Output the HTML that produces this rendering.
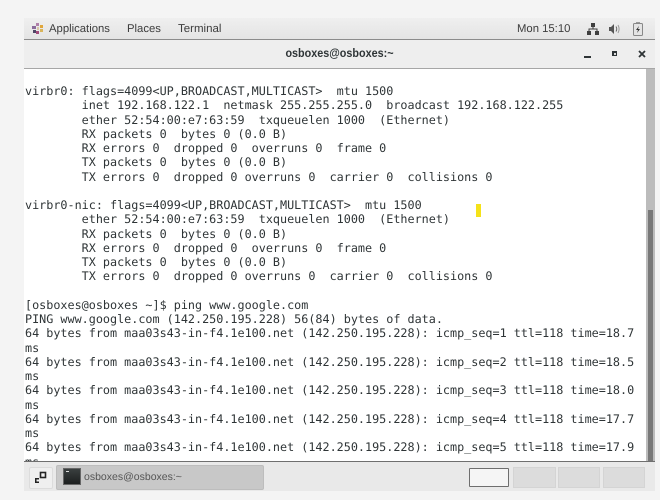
<!DOCTYPE html>
<html><head><meta charset="utf-8">
<style>
html,body{margin:0;padding:0}
body{width:660px;height:500px;overflow:hidden;background:#f4f4f4;position:relative;font-family:"Liberation Sans",sans-serif;color:#333}
.a{position:absolute}
pre{margin:0;font-family:"DejaVu Sans Mono","Liberation Mono",monospace;font-size:11.78px;line-height:14.25px;color:#2e3436;white-space:pre;text-rendering:geometricPrecision}
</style></head><body>
<div class="a" style="left:24px;top:18px;width:631px;height:21px;background:linear-gradient(#efefef,#e4e4e4)"></div>
<div class="a" style="left:24px;top:39px;width:631px;height:1px;background:#8b8b8b"></div>
<svg class="a" style="left:31px;top:22px" width="14" height="14" viewBox="0 0 14 14">
<rect x="5" y="1" width="3" height="3" fill="#b07fa8"/><rect x="9" y="3" width="3" height="3" fill="#e0a63c"/><rect x="1" y="4" width="4" height="3" fill="#8a6a9a"/><rect x="9" y="7" width="3" height="3" fill="#d9b45a"/><rect x="2" y="8" width="3" height="3" fill="#4d4666"/><rect x="5" y="9" width="3" height="3" fill="#a14a7a"/><rect x="6" y="5" width="2" height="3" fill="#d8c8a8"/>
</svg>
<div class="a" style="left:49px;top:21.500px;font-size:11.300px;line-height:15px;color:#3d3d3d;text-rendering:geometricPrecision">Applications</div>
<div class="a" style="left:127px;top:21.500px;font-size:11.300px;line-height:15px;color:#3d3d3d;text-rendering:geometricPrecision">Places</div>
<div class="a" style="left:178px;top:21.500px;font-size:11.500px;line-height:15px;color:#3d3d3d;text-rendering:geometricPrecision">Terminal</div>
<div class="a" style="left:517px;top:21.500px;font-size:11.300px;line-height:15px;color:#3d3d3d;text-rendering:geometricPrecision">Mon 15:10</div>
<svg class="a" style="left:586px;top:22px" width="14" height="14" viewBox="0 0 14 14" fill="#3f3f3f">
<rect x="5" y="1" width="4" height="4"/><rect x="1" y="9" width="4" height="4"/><rect x="9" y="9" width="4" height="4"/>
<path d="M7 5v2M3 9V7h8v2" stroke="#3f3f3f" fill="none"/>
</svg>
<svg class="a" style="left:608px;top:23px" width="14" height="12" viewBox="0 0 14 12">
<path d="M1 4h2l3-3v10L3 8H1z" fill="#555"/><path d="M8 3.500q1.500 2.500 0 5" stroke="#666" fill="none"/><path d="M10 2q2.200 4 0 8" stroke="#999" fill="none"/>
</svg>
<svg class="a" style="left:632px;top:21px" width="12" height="16" viewBox="0 0 12 16">
<rect x="4" y="1" width="4" height="2" fill="#999"/><rect x="1.500" y="2.500" width="9" height="12" rx="1" fill="#e4e4e4" stroke="#888"/><path d="M7 5L4 9h2l-1 3 3-4H6z" fill="#333"/>
</svg>

<div class="a" style="left:24px;top:40px;width:631px;height:28px;background:#eeeeee"></div>
<div class="a" style="left:24px;top:68px;width:631px;height:1px;background:#a6a6a6"></div>
<div class="a" style="left:24px;top:46px;width:631px;text-align:center;font-size:12px;line-height:15px;font-weight:bold;color:#2e3436;transform:scaleX(.9)">osboxes@osboxes:~</div>
<div class="a" style="left:584px;top:56px;width:7px;height:2px;background:#2e3436"></div>
<div class="a" style="left:612px;top:51px;width:5px;height:5px;background:#2e3436"></div>
<div class="a" style="left:614px;top:53px;width:2px;height:2px;background:#ddd"></div>
<svg class="a" style="left:637px;top:49px" width="10" height="10" viewBox="0 0 10 10"><path d="M2 2l6 6M8 2L2 8" stroke="#2e3436" stroke-width="1.800"/></svg>

<div class="a" style="left:24px;top:69px;width:622px;height:392px;background:#fff;overflow:hidden">
<pre class="a" style="left:1px;top:15px">virbr0: flags=4099&lt;UP,BROADCAST,MULTICAST&gt;  mtu 1500
        inet 192.168.122.1  netmask 255.255.255.0  broadcast 192.168.122.255
        ether 52:54:00:e7:63:59  txqueuelen 1000  (Ethernet)
        RX packets 0  bytes 0 (0.0 B)
        RX errors 0  dropped 0  overruns 0  frame 0
        TX packets 0  bytes 0 (0.0 B)
        TX errors 0  dropped 0 overruns 0  carrier 0  collisions 0

virbr0-nic: flags=4099&lt;UP,BROADCAST,MULTICAST&gt;  mtu 1500
        ether 52:54:00:e7:63:59  txqueuelen 1000  (Ethernet)
        RX packets 0  bytes 0 (0.0 B)
        RX errors 0  dropped 0  overruns 0  frame 0
        TX packets 0  bytes 0 (0.0 B)
        TX errors 0  dropped 0 overruns 0  carrier 0  collisions 0

[osboxes@osboxes ~]$ ping www.google.com
PING www.google.com (142.250.195.228) 56(84) bytes of data.
64 bytes from maa03s43-in-f4.1e100.net (142.250.195.228): icmp_seq=1 ttl=118 time=18.7
ms
64 bytes from maa03s43-in-f4.1e100.net (142.250.195.228): icmp_seq=2 ttl=118 time=18.5
ms
64 bytes from maa03s43-in-f4.1e100.net (142.250.195.228): icmp_seq=3 ttl=118 time=18.0
ms
64 bytes from maa03s43-in-f4.1e100.net (142.250.195.228): icmp_seq=4 ttl=118 time=17.7
ms
64 bytes from maa03s43-in-f4.1e100.net (142.250.195.228): icmp_seq=5 ttl=118 time=17.9
ms</pre>
</div>
<div class="a" style="left:476px;top:204px;width:5px;height:13px;background:#f5e219"></div>

<div class="a" style="left:646px;top:69px;width:9px;height:392px;background:#bcbcbc"></div>
<div class="a" style="left:648px;top:210px;width:5px;height:251px;background:#787878"></div>

<div class="a" style="left:24px;top:461px;width:631px;height:1px;background:#6f6f6f"></div>
<div class="a" style="left:24px;top:462px;width:631px;height:29px;background:#e9e9e9"></div>

<div class="a" style="left:29px;top:467px;width:22px;height:20px;background:#efefef;border:1px solid #dcdcdc;border-radius:2px"></div>
<svg class="a" style="left:34px;top:471px" width="14" height="14" viewBox="0 0 14 14">
<rect x="6.500" y="1.500" width="5" height="5" fill="none" stroke="#222" stroke-width="1.600"/><path d="M1 7h4v1.500H2.500V12H1zM1 10.500h4V12H1z" fill="#222"/>
</svg>
<div class="a" style="left:56px;top:465px;width:206px;height:23px;background:#c8c8c8;border:1px solid #bdbdbd;border-radius:2px"></div>
<div class="a" style="left:63px;top:468px;width:16px;height:15px;background:linear-gradient(#3a3f3f,#1c1f1f);border:1px solid #666"></div>
<div class="a" style="left:66px;top:471px;width:3px;height:1px;background:#ddd"></div>
<div class="a" style="left:84px;top:470px;font-size:10.500px;line-height:14px;color:#555;text-rendering:geometricPrecision">osboxes@osboxes:~</div>

<div class="a" style="left:469px;top:468px;width:38px;height:17px;background:#f5f5f5;border:1px solid #6e6e6e;border-radius:1px"></div>
<div class="a" style="left:513px;top:467px;width:41px;height:19px;background:#dcdcdc;border:1px solid #d4d4d4"></div>
<div class="a" style="left:558px;top:467px;width:40px;height:19px;background:#dcdcdc;border:1px solid #d4d4d4"></div>
<div class="a" style="left:603px;top:467px;width:40px;height:19px;background:#dcdcdc;border:1px solid #d4d4d4"></div>
</body></html>
